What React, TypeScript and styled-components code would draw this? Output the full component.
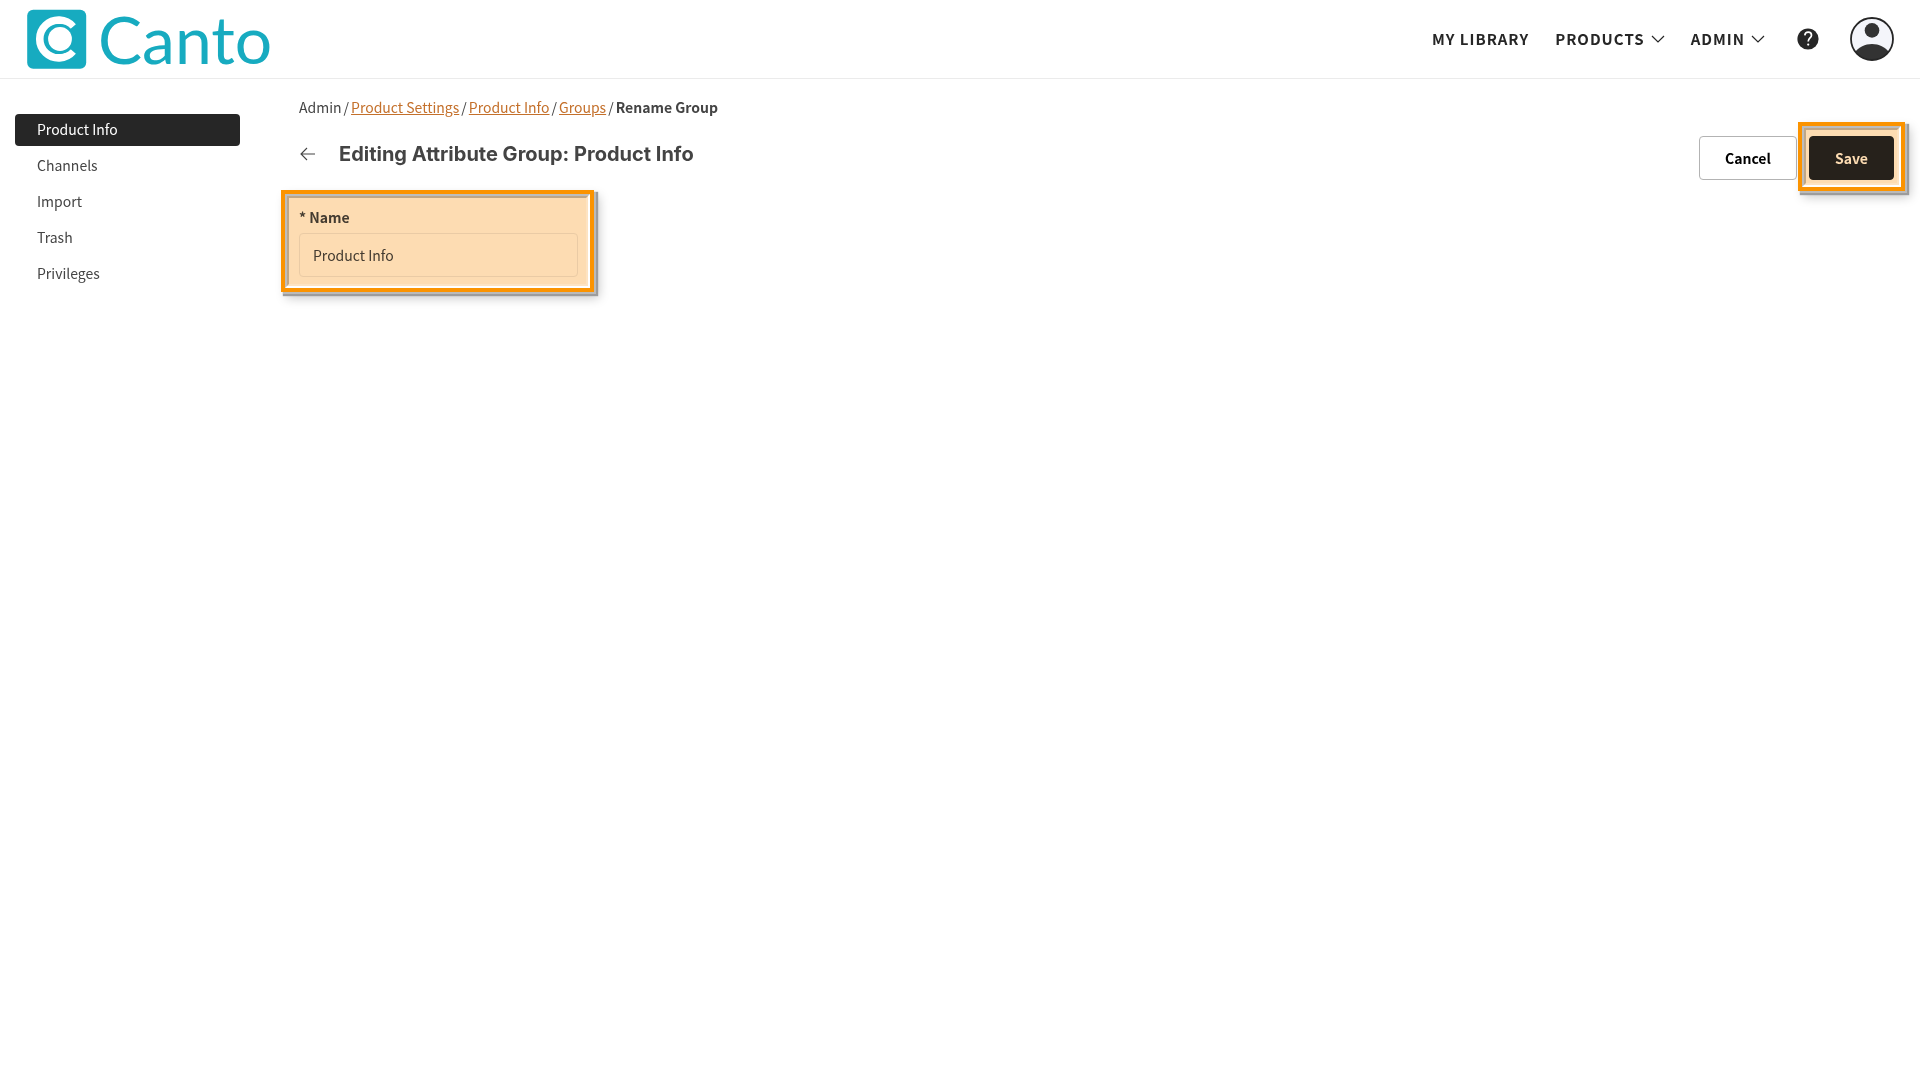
import React from "react";
import styled, { createGlobalStyle } from "styled-components";

const teal = "#17abc0";
const ink = "#262626";
const bodyText = "#444";
const linkColor = "#c4702b";

const GlobalStyle = createGlobalStyle`
  *, *::before, *::after { box-sizing: border-box; }
  body {
    margin: 0;
    background: #fff;
    color: ${bodyText};
    font-family: "Noto Sans CJK SC", "Open Sans", sans-serif;
    font-size: 14px;
    line-height: 20px;
  }
  #root { min-height: 100vh; }
  button, input { font: inherit; }
`;

const Header = styled.header`
  display: flex;
  align-items: center;
  justify-content: space-between;
  height: 79px;
  padding: 0 26px 0 27px;
  border-bottom: 1px solid #ebebeb;
`;

const Brand = styled.a`
  display: flex;
  align-items: center;
  gap: 11px;
  color: ${teal};
  text-decoration: none;
`;

const BrandName = styled.span`
  font-family: Lato, "Open Sans", sans-serif;
  font-weight: 400;
  font-size: 66px;
  line-height: 72px;
`;

const TopNav = styled.nav`
  display: flex;
  align-items: center;
  color: ${ink};
`;

const NavItem = styled.a`
  display: flex;
  align-items: center;
  gap: 6px;
  margin-right: 26px;
  color: ${ink};
  font-size: 15px;
  font-weight: 700;
  letter-spacing: 1px;
  text-decoration: none;
`;

const IconButton = styled.button<{ $gap?: number }>`
  display: flex;
  padding: 0;
  margin-left: ${(p) => p.$gap ?? 0}px;
  border: 0;
  background: none;
  color: inherit;
  cursor: pointer;
`;

const Body = styled.div`
  display: grid;
  grid-template-columns: 225px minmax(0, 1fr);
  column-gap: 59px;
  padding: 0 26px 0 15px;
`;

const Sidebar = styled.nav`
  display: flex;
  flex-direction: column;
  gap: 4px;
  padding-top: 35px;
`;

const SideLink = styled.a<{ $active?: boolean }>`
  display: block;
  padding: 5px 22px 7px;
  border-radius: 4px;
  background: ${(p) => (p.$active ? ink : "transparent")};
  color: ${(p) => (p.$active ? "#fff" : bodyText)};
  text-decoration: none;
`;

const Main = styled.main`
  padding-top: 18px;
`;

const Crumbs = styled.nav`
  display: flex;
  gap: 2px;
`;

const CrumbLink = styled.a`
  color: ${linkColor};
  text-decoration: underline;
`;

const Current = styled.span`
  font-weight: 700;
`;

const TitleRow = styled.div`
  display: flex;
  align-items: flex-start;
  justify-content: space-between;
  padding-top: 19px;
`;

const TitleGroup = styled.div`
  display: flex;
  align-items: center;
  gap: 22px;
  height: 36px;
`;

const Title = styled.h1`
  margin: 0;
  font-family: Inter, sans-serif;
  font-size: 20px;
  font-weight: 700;
  line-height: 28px;
`;

const Actions = styled.div`
  display: flex;
  gap: 12px;
`;

const Button = styled.button<{ $primary?: boolean }>`
  height: 44px;
  padding: 0 25px;
  border: 1px solid ${(p) => (p.$primary ? ink : "#b3b3b3")};
  border-radius: 4px;
  background: ${(p) => (p.$primary ? ink : "#fff")};
  color: ${(p) => (p.$primary ? "#fff" : "#000")};
  font-weight: 700;
  cursor: pointer;
`;

const Marked = styled.div`
  position: relative;
`;

const Callout = styled.div<{ $inset: string }>`
  position: absolute;
  inset: ${(p) => p.$inset};
  border: 4px solid #fb9300;
  box-shadow: 2px 2px 0 #bababa, 3px 3px 1px 1px #9c9c9c, 5px 6px 10px rgba(0, 0, 0, 0.22);
  pointer-events: none;

  &::before {
    content: "";
    position: absolute;
    inset: 0;
    background: #fddcb2;
    mix-blend-mode: multiply;
  }
`;

const Bevel = styled.div`
  position: absolute;
  inset: 0;
  border: 2px solid;
  border-color: #bdbdbd #fff #fff #bdbdbd;

  &::after {
    content: "";
    position: absolute;
    inset: 0;
    border: 2px solid;
    border-color: #bfa686 #fde3c2 #fde3c2 #bfa686;
  }
`;

const Field = styled.div`
  position: relative;
  display: flex;
  flex-direction: column;
  gap: 6px;
  width: 279px;
  margin-top: 27px;
`;

const Label = styled.label`
  font-weight: 700;
`;

const TextInput = styled.input`
  width: 100%;
  height: 44px;
  padding: 0 13px;
  border: 1px solid #ececec;
  border-radius: 4px;
  background: #fff;
  color: ${bodyText};
  outline: 0;
`;

const BrandMark = () => (
  <svg width="60" height="60" viewBox="0 0 60 60" aria-hidden="true">
    <rect x="0.2" y="0.8" width="59" height="59" rx="6" fill={teal} />
    <path d="M46 17.7A18.9 18.9 0 1 0 46 42.3" fill="none" stroke="#fff" strokeWidth="7.6" />
    <circle cx="33" cy="30" r="15" fill={teal} />
    <circle cx="33" cy="30" r="11.9" fill="#fff" />
  </svg>
);

const Chevron = () => (
  <svg width="14" height="8" viewBox="0 0 14 8" aria-hidden="true">
    <path d="M1 1L7 7L13 1" fill="none" stroke={ink} strokeWidth="1.2" />
  </svg>
);

const HelpIcon = () => (
  <svg width="22" height="22" viewBox="0 0 22 22" aria-hidden="true">
    <circle cx="11" cy="11" r="10.6" fill={ink} />
    <path
      d="M7.8 7.4C8 5.3 9.3 4.2 11.2 4.2C13.1 4.2 14.5 5.4 14.5 7.2C14.5 9.9 11.2 10 11.2 13.4"
      fill="none"
      stroke="#fff"
      strokeWidth="1.7"
    />
    <circle cx="11.2" cy="16.6" r="1.1" fill="#fff" />
  </svg>
);

const Avatar = () => (
  <svg width="44" height="44" viewBox="0 0 44 44" aria-hidden="true">
    <clipPath id="avatar-clip">
      <circle cx="22" cy="22" r="21" />
    </clipPath>
    <circle cx="22" cy="22" r="21" fill="#f4f5fa" />
    <g clipPath="url(#avatar-clip)" fill="#333">
      <circle cx="22" cy="13.4" r="7.3" />
      <path d="M4 36C9 30 15 27 22 27C29 27 35 30 40 36V44H4Z" />
    </g>
    <circle cx="22" cy="22" r="21" fill="none" stroke={ink} strokeWidth="1.8" />
  </svg>
);

const BackArrow = () => (
  <svg width="18" height="16" viewBox="0 0 18 16" aria-hidden="true">
    <path d="M16 8H2M8 2L2 8L8 14" fill="none" stroke={bodyText} strokeWidth="1.1" />
  </svg>
);

const sections = ["Product Info", "Channels", "Import", "Trash", "Privileges"];
const trail = ["Product Settings", "Product Info", "Groups"];

export default function App() {
  return (
    <>
      <GlobalStyle />
      <Header>
        <Brand href="#">
          <BrandMark />
          <BrandName>Canto</BrandName>
        </Brand>
        <TopNav aria-label="Main">
          <NavItem href="#">MY LIBRARY</NavItem>
          <NavItem href="#">PRODUCTS<Chevron /></NavItem>
          <NavItem href="#">ADMIN<Chevron /></NavItem>
          <IconButton $gap={6} aria-label="Help"><HelpIcon /></IconButton>
          <IconButton $gap={31} aria-label="Account"><Avatar /></IconButton>
        </TopNav>
      </Header>
      <Body>
        <Sidebar aria-label="Sections">
          {sections.map((name, i) => (
            <SideLink key={name} href="#" $active={i === 0}>{name}</SideLink>
          ))}
        </Sidebar>
        <Main>
          <Crumbs aria-label="Breadcrumb">
            <span>Admin</span>
            {trail.map((name) => (
              <React.Fragment key={name}>
                <span>/</span>
                <CrumbLink href="#">{name}</CrumbLink>
              </React.Fragment>
            ))}
            <span>/</span>
            <Current>Rename Group</Current>
          </Crumbs>
          <TitleRow>
            <TitleGroup>
              <IconButton aria-label="Back"><BackArrow /></IconButton>
              <Title>Editing Attribute Group: Product Info</Title>
            </TitleGroup>
            <Actions>
              <Button type="button">Cancel</Button>
              <Marked>
                <Button type="submit" $primary>Save</Button>
                <Callout $inset="-14px -11px -11px -11px"><Bevel /></Callout>
              </Marked>
            </Actions>
          </TitleRow>
          <Field>
            <Label htmlFor="group-name">* Name</Label>
            <TextInput id="group-name" type="text" defaultValue="Product Info" />
            <Callout $inset="-17px -16px -15px -18px"><Bevel /></Callout>
          </Field>
        </Main>
      </Body>
    </>
  );
}
